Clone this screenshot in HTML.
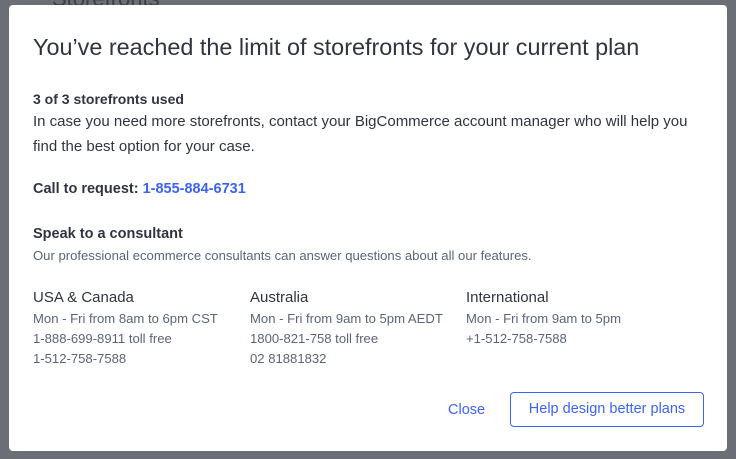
<!DOCTYPE html><html><head><style>
body{margin:0;width:736px;height:459px;background:#6c6e76;font-family:"Liberation Sans",sans-serif;position:relative;overflow:hidden;color:#313440}
.bg{position:absolute;left:52px;top:-14px;font-size:22px;color:#3d404a}
.m{position:absolute;left:9px;top:5px;width:718px;height:446px;background:#fff;border-radius:4px}
.a{position:absolute;white-space:nowrap}
h1{position:absolute;left:24px;top:29px;margin:0;font-weight:normal;font-size:23.4px;color:#313440}
.b{font-weight:bold;font-size:14px}
.t{font-size:15px;line-height:25px}
.s{font-size:13.1px;color:#5e637a;line-height:20px}
.c{font-size:15px}
.blue{color:#3c64f4}
.btn{position:absolute;left:501px;top:387px;width:194px;height:35px;border:1px solid #3c64f4;border-radius:4px;box-sizing:border-box;color:#3c64f4;font-size:14.5px;text-align:center;line-height:33px}
</style></head><body>
<div class="bg">Storefronts</div>
<div class="m">
<h1>You’ve reached the limit of storefronts for your current plan</h1>
<div class="a b" style="left:24px;top:86px">3 of 3 storefronts used</div>
<div class="a t" style="left:24px;top:104px">In case you need more storefronts, contact your BigCommerce account manager who will help you<br>find the best option for your case.</div>
<div class="a b" style="left:24px;top:176px;font-size:14.5px">Call to request: <span class="blue">1-855-884-6731</span></div>
<div class="a b" style="left:24px;top:221px;font-size:14.5px">Speak to a consultant</div>
<div class="a s" style="left:24px;top:241px">Our professional ecommerce consultants can answer questions about all our features.</div>
<div class="a c" style="left:24px;top:284px">USA &amp; Canada</div>
<div class="a s" style="left:24px;top:304px">Mon - Fri from 8am to 6pm CST<br>1-888-699-8911 toll free<br>1-512-758-7588</div>
<div class="a c" style="left:241px;top:284px">Australia</div>
<div class="a s" style="left:241px;top:304px">Mon - Fri from 9am to 5pm AEDT<br>1800-821-758 toll free<br>02 81881832</div>
<div class="a c" style="left:457px;top:284px">International</div>
<div class="a s" style="left:457px;top:304px">Mon - Fri from 9am to 5pm<br>+1-512-758-7588</div>
<div class="a blue" style="left:439px;top:397px;font-size:14.5px">Close</div>
<div class="btn">Help design better plans</div>
</div>
</body></html>
